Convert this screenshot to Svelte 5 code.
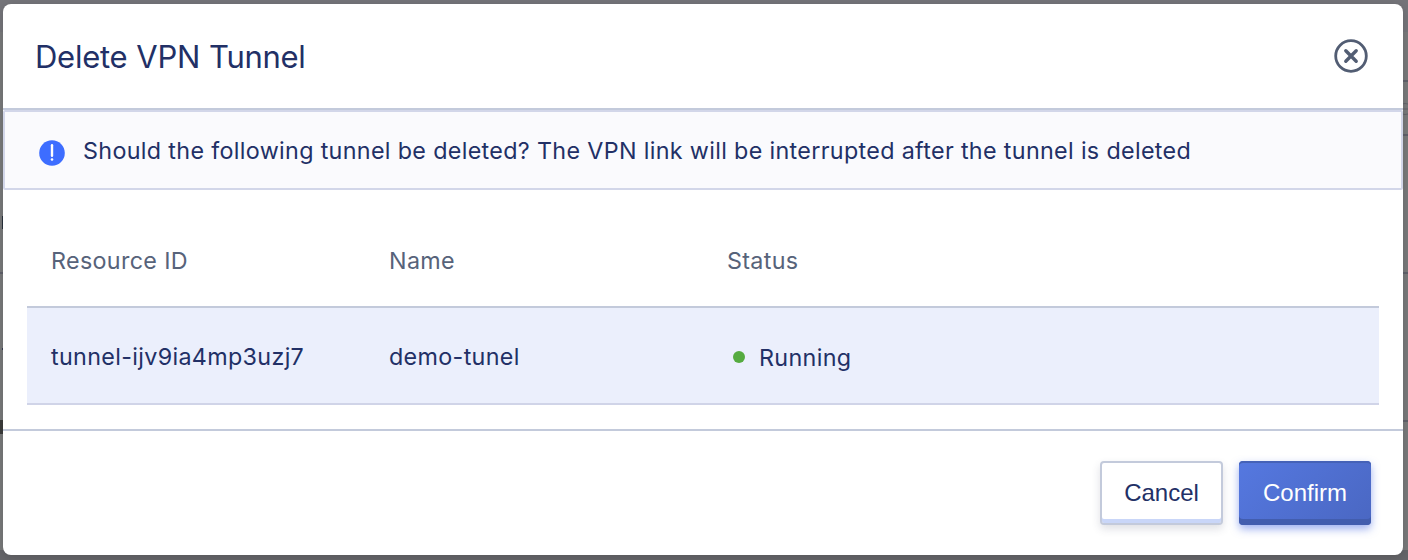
<script>
  const columns = ['Resource ID', 'Name', 'Status'];
  const tunnels = [{ id: 'tunnel-ijv9ia4mp3uzj7', name: 'demo-tunel', status: 'Running' }];
</script>

<div class="backdrop">
  <svg class="page" width="1408" height="560" viewBox="0 0 1408 560" aria-hidden="true">
    <rect width="1408" height="560" fill="#78797a" />
    <rect width="1408" height="32" fill="#747479" />
    <path d="M1400 81h8M1400 135h8M1400 273h8M1400 421h8M0 273h4" stroke="#5f606a" stroke-width="2" />
    <path d="M1402 104q3 -1 6 0M1402 109h6M1402 114q3 1 6 0" fill="none" stroke="#626369" stroke-width="1" />
    <path d="M2 216h2v13h-2z" fill="#28313b" />
    <path d="M2 348h2v2h-2z" fill="#35394f" />
    <path d="M0 420h4v14h-4z" fill="#3b3b3b" />
    <path d="M0 550h1408v10h-1408z" fill="#656569" />
  </svg>
  <section class="modal" role="dialog" aria-labelledby="title">
    <header>
      <h1 id="title">Delete VPN Tunnel</h1>
      <button class="close" aria-label="Close">
        <svg width="34" height="34" viewBox="0 0 34 34" fill="none" stroke="#525d73">
          <circle cx="17" cy="17" r="15.3" stroke-width="2.8" />
          <path d="M11.8 11.8l10.4 10.4M22.2 11.8l-10.4 10.4" stroke-width="3.4" stroke-linecap="round" />
        </svg>
      </button>
    </header>
    <div class="alert">
      <svg width="26" height="26" viewBox="0 0 26 26">
        <circle cx="13" cy="13" r="12.8" fill="#3d6dff" />
        <path d="M13 5.2v10.6" stroke="#fff" stroke-width="2.4" stroke-linecap="round" />
        <circle cx="13" cy="19.5" r="1.3" fill="#fff" />
      </svg>
      <p>Should the following tunnel be deleted? The VPN link will be interrupted after the tunnel is deleted</p>
    </div>
    <div class="body">
      <div class="row head">
        {#each columns as column}<span>{column}</span>{/each}
      </div>
      {#each tunnels as tunnel}
        <div class="row">
          <span>{tunnel.id}</span>
          <span>{tunnel.name}</span>
          <span class="status"><i></i>{tunnel.status}</span>
        </div>
      {/each}
    </div>
    <footer>
      <button class="btn cancel">Cancel</button>
      <button class="btn confirm">Confirm</button>
    </footer>
  </section>
</div>

<style>
  :global(body) { margin: 0; overflow: hidden; }
  * { box-sizing: border-box; }
  .backdrop {
    position: relative;
    width: 1408px;
    height: 560px;
    padding: 4px 5px 5px 3px;
    background: #747576;
    font-family: Inter, "Liberation Sans", sans-serif;
  }
  .page { position: absolute; inset: 0; }
  .modal {
    position: relative;
    display: flex;
    flex-direction: column;
    height: 551px;
    background: #fff;
    border-radius: 8px;
    box-shadow: 0 2px 8px rgba(0, 0, 0, 0.14);
    color: #223066;
    font-size: 23.3px;
    letter-spacing: 0.34px;
  }
  header {
    display: flex;
    align-items: center;
    justify-content: space-between;
    height: 106px;
    padding: 0 35px 0 32px;
    border-bottom: 2px solid #c3cadb;
  }
  h1 {
    margin: 0;
    padding-top: 1px;
    font-size: 31px;
    line-height: 40px;
    font-weight: 400;
    letter-spacing: -0.27px;
    word-spacing: 0.5px;
  }
  .close { display: flex; padding: 0; border: 0; background: none; }
  .alert {
    display: flex;
    align-items: center;
    gap: 18px;
    height: 80px;
    padding: 0 34px;
    border: 2px solid #d2d6e9;
    border-radius: 2px;
    background: #fafafd;
  }
  .alert svg { margin-top: 6px; }
  p { margin: 0; padding-top: 2px; line-height: 36px; white-space: nowrap; }
  .body { height: 239px; padding: 26px 24px 0; }
  .row {
    display: grid;
    grid-template-columns: 338px 338px 1fr;
    align-items: center;
    height: 97px;
    padding: 2px 24px 0;
    border-bottom: 2px solid #d0d4e8;
    background: #ebeffc;
    line-height: 36px;
  }
  .row.head {
    height: 92px;
    padding-top: 0;
    border-color: #c3cadb;
    background: none;
    color: #57637a;
  }
  .status { display: flex; align-items: center; padding: 2px 0 0 6px; }
  .status i { width: 12px; height: 12px; margin: -1px 14px 0 0; border-radius: 50%; background: #55ab40; }
  footer {
    display: flex;
    justify-content: flex-end;
    gap: 16px;
    flex: 1;
    padding: 30px 32px 0;
    border-top: 2px solid #c3cadb;
  }
  .btn {
    height: 64px;
    padding: 0;
    border: 2px solid #c3cadb;
    border-radius: 4px;
    font: 24px/60px "Liberation Sans", Arial, sans-serif;
  }
  .cancel {
    width: 123px;
    background: #fff;
    color: #223066;
    box-shadow: inset 0 -4px #c9d6f8, 0 4px 8px rgba(55, 65, 95, 0.16);
  }
  .confirm {
    width: 132px;
    border: 0;
    background: linear-gradient(135deg, #5578e0, #4a67c2);
    color: #fff;
    box-shadow: inset 0 2px #4562b7, inset 0 -6px #425dae, 0 4px 8px rgba(61, 97, 225, 0.5);
  }
</style>
